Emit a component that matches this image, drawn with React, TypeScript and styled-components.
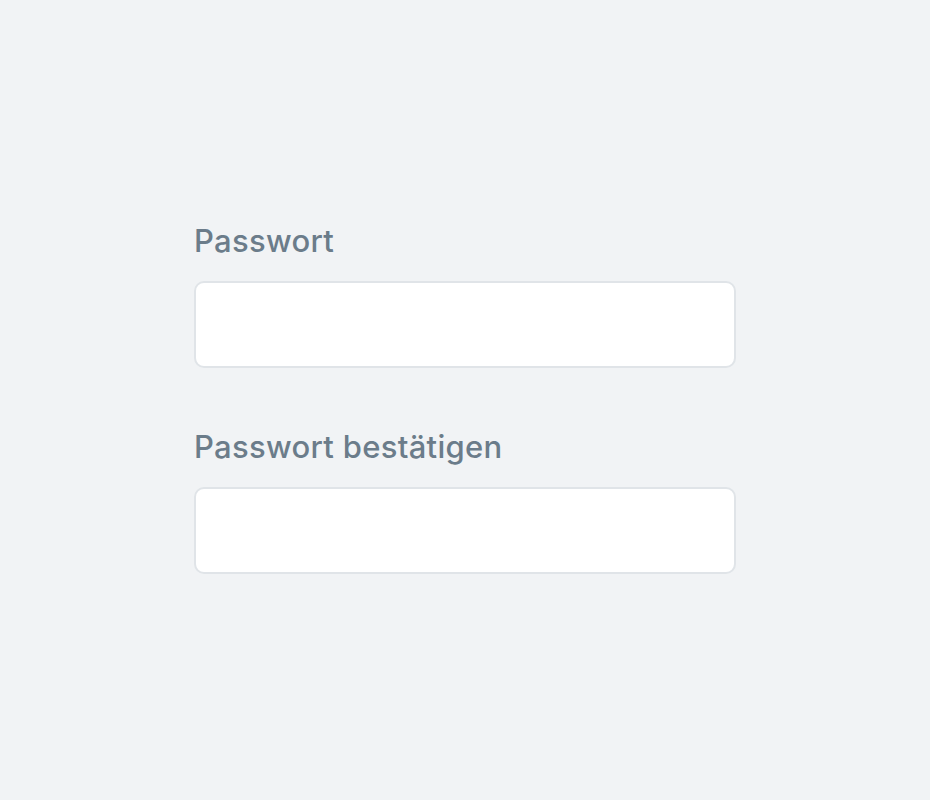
import React from "react";
import styled, { createGlobalStyle } from "styled-components";

const Global = createGlobalStyle`
  html, body { margin: 0; padding: 0; }
  body { background: #f1f3f5; font-family: Inter, "Noto Sans", sans-serif; }
`;

const Page = styled.div`
  box-sizing: border-box;
  min-height: 100vh;
  padding-bottom: 5px;
  display: flex;
  align-items: center;
  justify-content: center;
`;

const Form = styled.form`
  width: 542px;
  display: flex;
  flex-direction: column;
  gap: 59px;
`;

const Field = styled.div`
  display: flex;
  flex-direction: column;
  gap: 20px;
`;

const Label = styled.label`
  font-size: 31px;
  line-height: 40px;
  font-weight: 500;
  letter-spacing: 0.3px;
  color: #6b7c8a;
`;

const Input = styled.input`
  box-sizing: border-box;
  height: 87px;
  width: 100%;
  background: #ffffff;
  border: 2.5px solid #e0e4e8;
  border-radius: 10px;
  outline: none;
`;

export default function App() {
  return (
    <>
      <Global />
      <Page>
        <Form>
          <Field>
            <Label>Passwort</Label>
            <Input type="password" />
          </Field>
          <Field>
            <Label>Passwort bestätigen</Label>
            <Input type="password" />
          </Field>
        </Form>
      </Page>
    </>
  );
}
